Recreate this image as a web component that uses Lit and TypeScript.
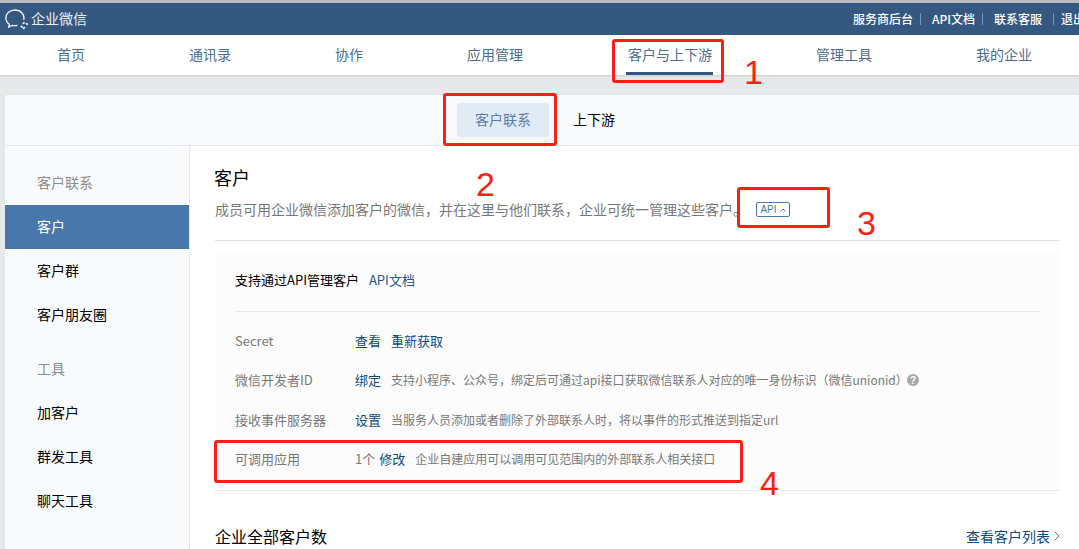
import { LitElement, html, css } from "lit";
import { customElement } from "lit/decorators.js";

const NAV = ["首页", "通讯录", "协作", "应用管理", "客户与上下游", "管理工具", "我的企业"];

@customElement("app-root")
export class AppRoot extends LitElement {
  static styles = css`
    :host {
      display: block;
      position: relative;
      width: 1079px;
      height: 549px;
      overflow: hidden;
      background: #e7e8ea;
      font-family: "Noto Sans CJK SC", "Noto Sans", sans-serif;
      font-size: 14px;
      color: #000;
    }
    .topline { height: 3px; background: #b9bcc0; }
    .header {
      height: 32px;
      background: #345880;
      display: flex;
      align-items: center;
      justify-content: space-between;
      color: #fff;
    }
    .brand { display: flex; align-items: center; gap: 2px; padding-left: 5px; font-size: 14px; color: #e9eef4; }
    .brand svg { display: block; }
    .brand span { padding-bottom: 3px; }
    .links { display: flex; align-items: center; font-size: 12px; font-weight: 500; white-space: nowrap; width: 226px; overflow: hidden; flex: none; padding-bottom: 1px; }
    .links span { flex: none; }
    .links i { flex: none; width: 1px; height: 12px; background: #7d95b0; margin: 0 11px 0 7px; }
    .links i.last { margin: 0 7px 0 11px; }
    .nav {
      height: 40px;
      background: #fff;
      display: flex;
      align-items: stretch;
      gap: 104px;
      padding-left: 57px;
      box-shadow: 0 1px 2px rgba(0, 0, 0, 0.12);
      color: #4d6c91;
      position: relative;
    }
    .nav div { display: flex; align-items: center; position: relative; padding-bottom: 3px; }
    .nav .on { margin-left: 1px; }
    .nav .on::after {
      content: "";
      position: absolute;
      left: -2px;
      right: -1px;
      bottom: 0;
      height: 3px;
      background: #345880;
    }
    .card {
      margin: 20px 0 0 5px;
      background: #fff;
      border-radius: 4px 0 0 0;
      height: 454px;
      overflow: hidden;
    }
    .sub {
      height: 50px;
      background: #f9fafc;
      border-bottom: 1px solid #e4e6e9;
      display: flex;
      align-items: center;
      padding-left: 452px;
      gap: 24px;
      box-sizing: content-box;
    }
    .sub div { box-sizing: border-box; padding-bottom: 2px; }
    .pill {
      width: 92px;
      height: 34px;
      border-radius: 3px;
      background: #e0ebf7;
      color: #5a7ca8;
      display: flex;
      align-items: center;
      justify-content: center;
    }
    .body { display: flex; height: 403px; }
    .side {
      width: 184px;
      flex: none;
      background: #f9fafc;
      border-right: 1px dotted #cfd3da;
      padding-top: 15px;
    }
    .side div { box-sizing: border-box; height: 44px; display: flex; align-items: center; padding: 0 0 2px 32px; }
    .side .group { color: #8c8c8c; }
    .side .group.gap { margin-top: 10px; }
    .side .on { background: #4a77ab; color: #fff; }
    .main { flex: 1; padding: 0 19px 0 25px; min-width: 0; }
    h1 { margin: 19px 0 0 -1px; font-size: 18px; font-weight: 400; line-height: 24px; }
    .desc { display: flex; align-items: center; margin-top: 10px; height: 20px; color: #787878; white-space: nowrap; font-size: 14px; }
    .badge {
      margin: 1px 0 0 9px;
      height: 15px;
      width: 34px;
      box-sizing: border-box;
      border: 1px solid #4a77ab;
      border-radius: 2px;
      color: #4a77ab;
      font-size: 10px;
      display: flex;
      align-items: center;
      justify-content: center;
      gap: 3px;
      font-family: "Liberation Sans", sans-serif;
    }
    .rule { height: 1px; background: #dde3ea; margin-top: 21px; }
    .panel { margin-top: 10px; height: 239px; background: #fcfcfd; border-bottom: 1px solid #e6e6e6; padding: 0 20px; }
    .api { box-sizing: border-box; height: 61px; padding-bottom: 4px; display: flex; align-items: center; gap: 10px; border-bottom: 1px solid #e8e8e8; font-size: 13px; }
    a { color: #0c4a80; }
    .api a { color: #21558c; }
    .rows { padding-top: 9px; }
    .row { height: 39.3px; display: flex; align-items: center; white-space: nowrap; font-size: 13px; color: #787878; }
    .row .k { width: 120px; flex: none; }
    .row a { margin-right: 10px; }
    .row .num { margin-right: 4px; }
    .row .note { font-size: 12px; }
    .row svg { margin-left: -1px; }
    .foot { display: flex; justify-content: space-between; align-items: center; margin-top: 33px; }
    .foot h2 { margin: 0; font-size: 16px; font-weight: 400; line-height: 24px; }
    .foot a { display: flex; align-items: center; gap: 4px; font-size: 14px; }
    .mark { position: absolute; border: 3px solid #ff1e14; border-radius: 3px; box-sizing: border-box; }
    .digit { position: absolute; color: #ff1e14; font-size: 34px; line-height: 40px; font-family: "Liberation Sans", sans-serif; }
    .m1 { left: 612px; top: 39px; width: 112px; height: 44px; }
    .m2 { left: 443px; top: 93px; width: 114px; height: 53px; }
    .m3 { left: 737px; top: 187px; width: 93px; height: 41px; }
    .m4 { left: 214px; top: 440px; width: 529px; height: 43px; }
    .d1 { left: 744px; top: 52px; }
    .d2 { left: 476px; top: 164px; }
    .d3 { left: 857px; top: 203px; }
    .d4 { left: 760px; top: 463px; }
  `;

  render() {
    return html`
      <div class="topline"></div>
      <div class="header">
        <div class="brand">
          <svg width="24" height="22" viewBox="0 0 24 22" fill="none" stroke="#eef2f6" stroke-width="1.3" stroke-linecap="round">
            <path d="M18.9 11.5C19.6 6 15.5 2 9.800 2 4.800 2 .9 5.600 .9 10c0 2.600 1.300 4.800 3.400 6.200l-.6 2.800 3.300-1.600c.9.2 1.800.3 2.800.3.8 0 1.500-.1 2.200-.2" />
            <path d="M18.400 15.400l.6-.6M21.500 15.600l.6.6M16.500 18.500l.6.6M18.700 20.300l.6-.6" stroke-width="1.800" />
          </svg>
          <span>企业微信</span>
        </div>
        <div class="links">
          <span>服务商后台</span><i></i><span>API文档</span><i></i><span>联系客服</span><i class="last"></i><span>退出</span>
        </div>
      </div>
      <div class="nav">
        ${NAV.map((n, i) => html`<div class=${i === 4 ? "on" : ""}>${n}</div>`)}
      </div>
      <div class="card">
        <div class="sub"><div class="pill">客户联系</div><div>上下游</div></div>
        <div class="body">
          <div class="side">
            <div class="group">客户联系</div>
            <div class="on">客户</div>
            <div>客户群</div>
            <div>客户朋友圈</div>
            <div class="group gap">工具</div>
            <div>加客户</div>
            <div>群发工具</div>
            <div>聊天工具</div>
          </div>
          <div class="main">
            <h1>客户</h1>
            <div class="desc">
              成员可用企业微信添加客户的微信，并在这里与他们联系，企业可统一管理这些客户。
              <span class="badge">API<svg width="6" height="4" viewBox="0 0 6 4" fill="none" stroke="#4a77ab"><path d="M.5 3.5 3 1l2.500 2.500" /></svg></span>
            </div>
            <div class="rule"></div>
            <div class="panel">
              <div class="api"><span>支持通过API管理客户</span><a>API文档</a></div>
              <div class="rows">
                <div class="row"><span class="k">Secret</span><a>查看</a><a>重新获取</a></div>
                <div class="row">
                  <span class="k">微信开发者ID</span><a>绑定</a><span class="note">支持小程序、公众号，绑定后可通过api接口获取微信联系人对应的唯一身份标识（微信unionid）</span>
                  <svg width="12" height="12" viewBox="0 0 12 12"><circle cx="6" cy="6" r="6" fill="#a8a8a8" /><text x="6" y="9.500" text-anchor="middle" font-size="10" font-weight="700" fill="#fff" font-family="Liberation Sans">?</text></svg>
                </div>
                <div class="row"><span class="k">接收事件服务器</span><a>设置</a><span class="note">当服务人员添加或者删除了外部联系人时，将以事件的形式推送到指定url</span></div>
                <div class="row"><span class="k">可调用应用</span><span class="num">1个</span><a>修改</a><span class="note">企业自建应用可以调用可见范围内的外部联系人相关接口</span></div>
              </div>
            </div>
            <div class="foot">
              <h2>企业全部客户数</h2>
              <a>查看客户列表<svg width="6" height="10" viewBox="0 0 6 10" fill="none" stroke="#4a6f96"><path d="M.8.8 5 5 .8 9.200" /></svg></a>
            </div>
          </div>
        </div>
      </div>
      <div class="mark m1"></div><div class="digit d1">1</div>
      <div class="mark m2"></div><div class="digit d2">2</div>
      <div class="mark m3"></div><div class="digit d3">3</div>
      <div class="mark m4"></div><div class="digit d4">4</div>
    `;
  }
}
